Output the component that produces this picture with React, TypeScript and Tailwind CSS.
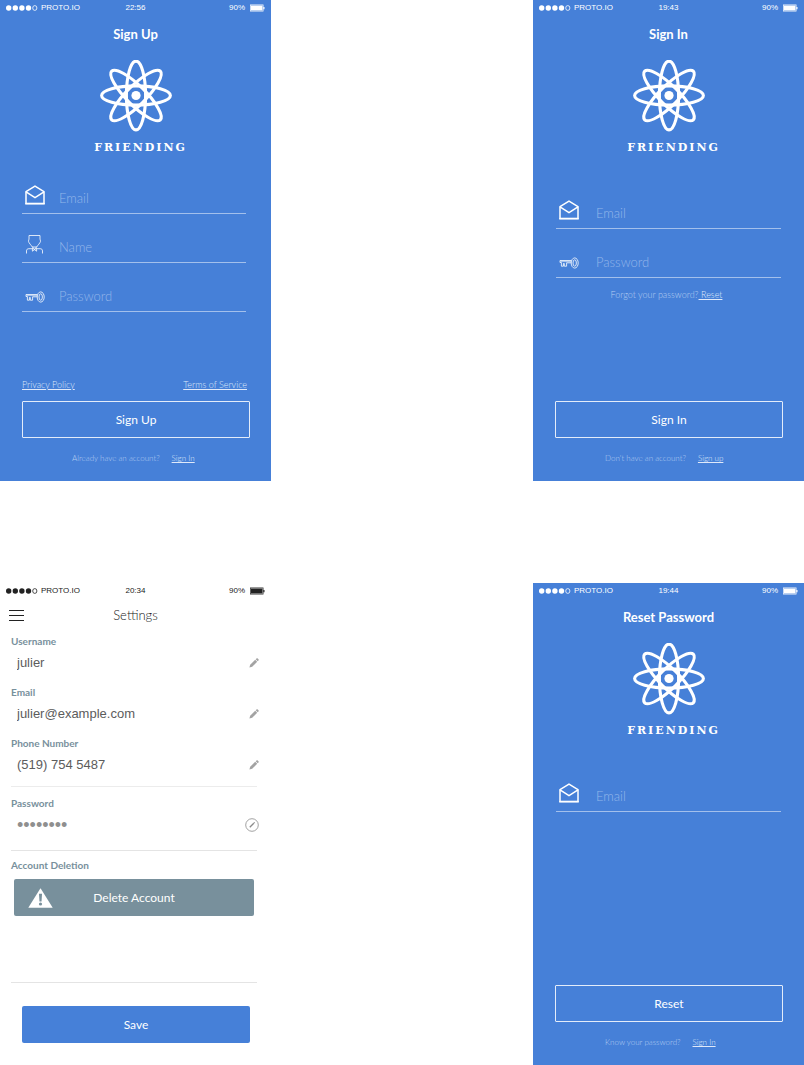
import type { ReactNode } from 'react';

function StatusBar({ time }: { time: string }) {
  return (
    <div className="grid h-[15px] grid-cols-3 items-center px-[6px] font-['Liberation_Sans',sans-serif] text-[8px] leading-[15px]">
      <div className="flex items-center gap-[3px]">
        <svg width="32" height="6" viewBox="0 0 32 6" fill="currentColor" aria-hidden="true">
          <circle cx="2.7" cy="3" r="2.7" />
          <circle cx="9.3" cy="3" r="2.7" />
          <circle cx="15.9" cy="3" r="2.7" />
          <circle cx="22.5" cy="3" r="2.7" />
          <ellipse cx="28.8" cy="3" rx="2.1" ry="2.4" fill="none" stroke="currentColor" strokeWidth="0.8" />
        </svg>
        <span>PROTO.IO</span>
      </div>
      <div className="text-center">{time}</div>
      <div className="flex items-center justify-end gap-[5px]">
        <span>90%</span>
        <svg width="15" height="8" viewBox="0 0 15 8" aria-hidden="true">
          <rect x="0.4" y="0.9" width="12.7" height="6.2" fill="none" stroke="currentColor" strokeWidth="0.7" />
          <rect x="1" y="1.5" width="11.5" height="5" fill="currentColor" />
          <path d="M13.9 3v2.2" stroke="currentColor" strokeWidth="1.2" />
        </svg>
      </div>
    </div>
  );
}

function Brand() {
  return (
    <div className="flex flex-col items-center">
      <svg width="72" height="72" viewBox="0 0 72 72" fill="none" stroke="white" strokeWidth="3.1" aria-hidden="true">
        <ellipse cx="36" cy="35.500" rx="34.400" ry="9.600" />
        <ellipse cx="36" cy="35.500" rx="34.400" ry="9.600" transform="rotate(45 36 35.5)" />
        <ellipse cx="36" cy="35.500" rx="34.400" ry="9.600" transform="rotate(90 36 35.5)" />
        <ellipse cx="36" cy="35.500" rx="34.400" ry="9.600" transform="rotate(135 36 35.5)" />
        <circle cx="36" cy="35.500" r="4.600" fill="white" stroke="none" />
      </svg>
      <p className="mt-2 pl-[10px] font-['DejaVu_Serif',serif] text-[11px] leading-4 font-bold tracking-[2px]">
        FRIENDING
      </p>
    </div>
  );
}

function EnvelopeIcon() {
  return (
    <svg width="20" height="20" viewBox="0 0 20 20" fill="none" stroke="white" strokeWidth="1.5" aria-hidden="true">
      <path d="M1 6.7 10 1.2l9 5.5v11.8H1z" />
      <path d="M1 6.9l9 5.7 9-5.7" />
      <path d="M.3 18.7h19.4" />
    </svg>
  );
}

function PersonIcon() {
  return (
    <svg width="20" height="20" viewBox="0 0 20 20" fill="none" stroke="white" strokeWidth="0.8" aria-hidden="true">
      <path d="M4 1.500h11v3.600c0 .8.7 1.100.5 2.300-.5 1.900-2.600 3.600-3.800 5.600H7.300C6.100 11 4 9.300 3.500 7.400 3.300 6.200 4 5.900 4 5.100z" />
      <path d="M7.300 13l2.200 2 2.200-2" />
      <path d="M7.400 14v3.200l2.100-1.600 2.100 1.600V14l-2.100 1.600z" />
      <path d="M1.500 19.500v-2.600c0-1.400.9-2.200 2.300-2.200h3.400M17.500 19.500v-2.600c0-1.400-.9-2.200-2.300-2.200h-3.400" />
    </svg>
  );
}

function KeyIcon() {
  return (
    <svg width="20" height="12" viewBox="0 0 20 12" fill="none" stroke="white" strokeWidth="0.8" aria-hidden="true">
      <ellipse cx="15.700" cy="6" rx="3.500" ry="5.100" />
      <ellipse cx="15.700" cy="6" rx="1.700" ry="3.200" />
      <path d="M12.300 3.500H1v2h1.400v3.700h2V6.500h.9v2.700h2.300V5.800h4.700" />
      <path d="M1.500 4.600h10.700" strokeWidth="0.6" />
    </svg>
  );
}

type FieldProps = { id: string; label: string; type: string; icon: ReactNode; wide?: boolean };

function Field({ id, label, type, icon, wide }: FieldProps) {
  return (
    <div className={`flex h-[49px] items-end border-b border-[#a3c0ec] pb-[6px] pl-[3px] ${wide ? 'gap-[17px]' : 'gap-[14px]'}`}>
      <label htmlFor={id} className="mb-[2px] flex h-5 w-5 items-end justify-center">
        {icon}
      </label>
      <input
        id={id}
        type={type}
        aria-label={label}
        placeholder={label}
        className="h-[18px] min-w-0 flex-1 bg-transparent text-[13px] leading-[18px] font-light text-white outline-none placeholder:text-[#94b6ea]"
      />
    </div>
  );
}

function OutlineButton({ children }: { children: ReactNode }) {
  return (
    <button type="submit" className="h-[37px] w-full rounded-[1px] border border-[#e3ecfa] text-[12px] leading-4">
      {children}
    </button>
  );
}

function Prompt({ text, link }: { text: string; link: string }) {
  return (
    <p className="mt-3 flex gap-3 pl-[50px] text-[8px] leading-4 font-light text-[#b4ccf1]">
      <span>{text}</span>
      <a href="#" className="text-[#dfe9fa] underline">{link}</a>
    </p>
  );
}

function AuthScreen({ time, title, formTop, fieldInset, children, footer }: {
  time: string;
  title: string;
  formTop: string;
  fieldInset: string;
  children: ReactNode;
  footer: ReactNode;
}) {
  return (
    <section className="flex min-h-[481px] flex-col bg-[#4680d8] text-white">
      <StatusBar time={time} />
      <h1 className="mt-2 mb-[15px] text-center text-[13px] leading-[22px] font-bold">{title}</h1>
      <Brand />
      <form className={`flex flex-1 flex-col pr-[21px] pb-[15px] pl-[22px] ${formTop}`} onSubmit={(e) => e.preventDefault()}>
        <div className={fieldInset}>{children}</div>
        <div className="mt-auto">{footer}</div>
      </form>
    </section>
  );
}

function PencilIcon() {
  return (
    <svg width="10" height="10" viewBox="0 0 10 10" fill="#a3a3a3" aria-hidden="true">
      <path d="M.4 9.600l.8-2.900L6.200 1.700l2 2L3.200 8.700z" />
      <path d="M6.700 1.200l.8-.8c.4-.4.900-.3 1.200 0l.8.8c.3.300.3.800 0 1.200l-.8.800z" />
    </svg>
  );
}

function CircledPencilIcon() {
  return (
    <svg width="14" height="14" viewBox="0 0 14 14" fill="none" stroke="#8a8a8a" aria-hidden="true">
      <circle cx="7" cy="7" r="6.300" strokeWidth="0.8" />
      <path d="M4.800 9.200l4-4" strokeWidth="1.300" />
      <path d="M9 5l.6-.6" strokeWidth="1.300" />
    </svg>
  );
}

function Setting({ id, label, type, value, circled }: {
  id: string;
  label: string;
  type: string;
  value: string;
  circled?: boolean;
}) {
  return (
    <div>
      <label htmlFor={id} className="block text-[10px] leading-3 font-bold text-[#78909c]">{label}</label>
      <div className="mt-[6px] -mr-[2px] flex h-5 items-center pl-[6px]">
        <input
          id={id}
          type={type}
          defaultValue={value}
          className={`h-5 min-w-0 flex-1 bg-transparent font-['Liberation_Sans',sans-serif] leading-5 outline-none ${circled ? 'text-[18px] text-[#8f8f8f]' : 'text-[13px] text-[#5c5c5c]'}`}
        />
        <button type="button" aria-label={`Edit ${label}`}>
          {circled ? <CircledPencilIcon /> : <PencilIcon />}
        </button>
      </div>
    </div>
  );
}

function SettingsScreen() {
  return (
    <section className="flex min-h-[482px] flex-col bg-white text-[#222222]">
      <StatusBar time="20:34" />
      <header className="mt-[6px] grid h-[22px] grid-cols-[15px_1fr_15px] items-center px-[9px]">
        <button type="button" aria-label="Menu" className="flex flex-col gap-1">
          <span className="h-px w-full bg-[#222222]" />
          <span className="h-px w-full bg-[#222222]" />
          <span className="h-px w-full bg-[#222222]" />
        </button>
        <h1 className="text-center text-[13px] leading-[22px] font-light">Settings</h1>
      </header>
      <form className="mt-[9px] flex flex-1 flex-col" onSubmit={(e) => e.preventDefault()}>
        <div className="mr-[14px] ml-[11px] flex flex-col gap-[13px] border-b border-[#ececec] pb-[11px]">
          <Setting id="settings-username" label="Username" type="text" value="julier" />
          <Setting id="settings-email" label="Email" type="email" value="julier@example.com" />
          <Setting id="settings-phone" label="Phone Number" type="tel" value="(519) 754 5487" />
        </div>
        <div className="mr-[14px] ml-[11px] border-b border-[#e4e4e4] pt-[10px] pb-[15px]">
          <Setting id="settings-password" label="Password" type="password" value="password" circled />
        </div>
        <div className="mr-[14px] ml-[11px] flex-1 border-b border-[#e4e4e4] pt-2">
          <h2 className="text-[10px] leading-3 font-bold text-[#78909c]">Account Deletion</h2>
          <div className="mt-2 px-[3px]">
            <button
              type="button"
              className="grid h-[37px] w-full grid-cols-[24px_1fr_24px] items-center rounded-[2px] bg-[#78909c] px-[14px] text-[12px] leading-4 text-white"
            >
              <svg width="25" height="20" viewBox="0 0 25 20" aria-hidden="true">
                <path d="M12.500.3 24.700 19.700H.3z" fill="white" />
                <path d="M11 5.800h3l-.5 7.700h-2z" fill="#78909c" />
                <circle cx="12.500" cy="16" r="1.600" fill="#78909c" />
              </svg>
              <span>Delete Account</span>
            </button>
          </div>
        </div>
        <div className="pt-[23px] pr-[21px] pb-[22px] pl-[22px]">
          <button type="submit" className="h-[37px] w-full rounded-[2px] bg-[#4680d8] text-[12px] leading-4 text-white">
            Save
          </button>
        </div>
      </form>
    </section>
  );
}

export default function App() {
  return (
    <main className="grid min-h-screen grid-cols-2 grid-rows-[auto_1fr] gap-x-[262px] gap-y-[102px] bg-white font-['Lato',sans-serif]">
      <AuthScreen
        time="22:56"
        title="Sign Up"
        formTop="pt-[9px]"
        fieldInset="pr-1"
        footer={
          <>
            <div className="mb-2 flex justify-between pr-[3px] text-[9px] leading-4 font-light text-[#dfe9fa]">
              <a href="#" className="underline">Privacy Policy</a>
              <a href="#" className="underline">Terms of Service</a>
            </div>
            <OutlineButton>Sign Up</OutlineButton>
            <Prompt text="Already have an account?" link="Sign In" />
          </>
        }
      >
        <Field id="signup-email" label="Email" type="email" icon={<EnvelopeIcon />} />
        <Field id="signup-name" label="Name" type="text" icon={<PersonIcon />} />
        <Field id="signup-password" label="Password" type="password" icon={<KeyIcon />} />
      </AuthScreen>

      <AuthScreen
        time="19:43"
        title="Sign In"
        formTop="pt-[24px]"
        fieldInset="pl-px pr-[2px]"
        footer={
          <>
            <OutlineButton>Sign In</OutlineButton>
            <Prompt text="Don't have an account?" link="Sign up" />
          </>
        }
      >
        <Field id="signin-email" label="Email" type="email" icon={<EnvelopeIcon />} wide />
        <Field id="signin-password" label="Password" type="password" icon={<KeyIcon />} wide />
        <p className="mt-[9px] pr-1 text-center text-[9px] leading-4 font-light text-[#b4ccf1]">
          Forgot your password?<a href="#" className="text-[#dfe9fa] underline"> Reset</a>
        </p>
      </AuthScreen>

      <SettingsScreen />

      <AuthScreen
        time="19:44"
        title="Reset Password"
        formTop="pt-[24px]"
        fieldInset="pl-px pr-[2px]"
        footer={
          <>
            <OutlineButton>Reset</OutlineButton>
            <Prompt text="Know your password?" link="Sign In" />
          </>
        }
      >
        <Field id="reset-email" label="Email" type="email" icon={<EnvelopeIcon />} wide />
      </AuthScreen>
    </main>
  );
}
